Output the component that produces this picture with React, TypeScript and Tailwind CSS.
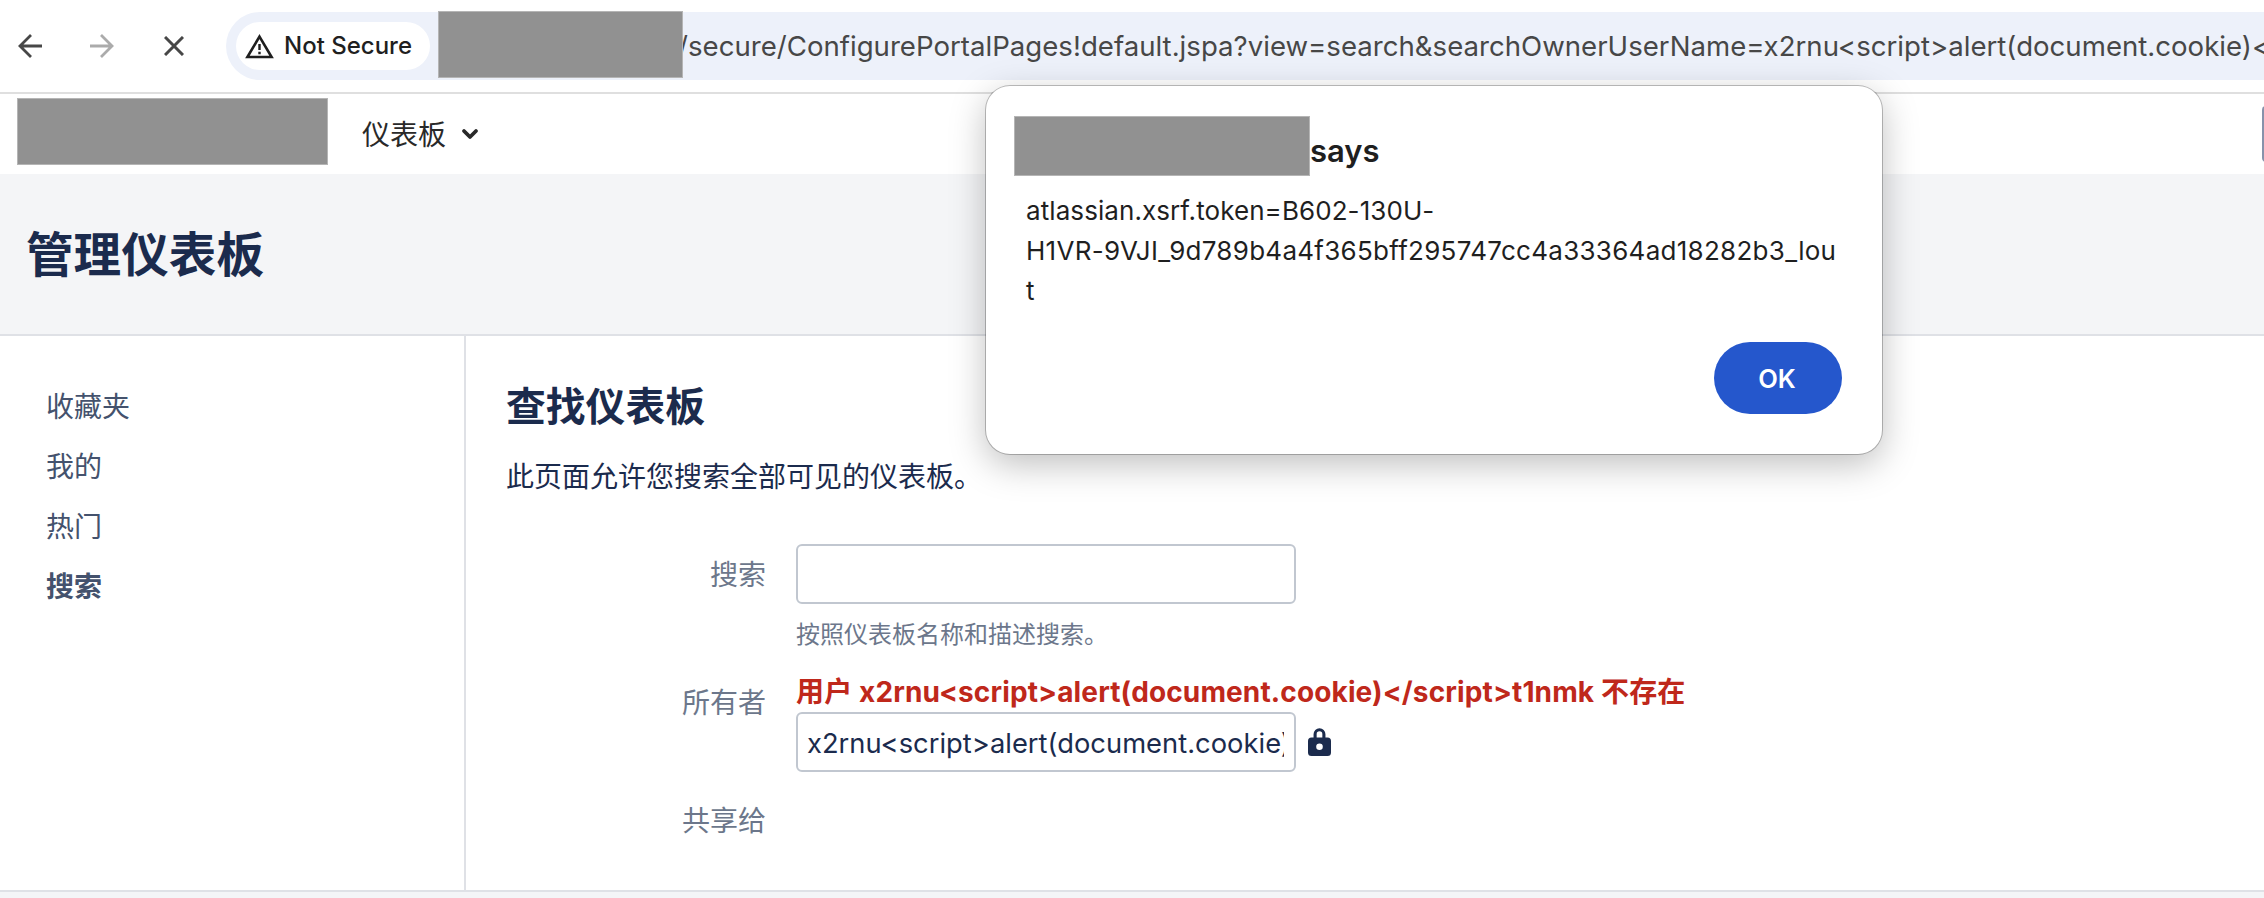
import type { ReactNode } from "react";

function Redacted({ className }: { className: string }) {
  return <div className={`shrink-0 border border-[#b5b5b5] bg-[#919191] ${className}`} />;
}

function BackIcon({ className }: { className: string }) {
  return (
    <svg className={className} width="24" height="24" viewBox="0 0 24 24" fill="none" stroke="currentColor" strokeWidth="2.8">
      <path d="M24 12H2M13 1L2 12L13 23" />
    </svg>
  );
}

function BrowserBar() {
  return (
    <header className="flex h-[94px] shrink-0 items-start overflow-hidden border-b-2 border-[#dfdfdf] bg-white">
      <div className="flex h-[92px] w-[226px] shrink-0 items-center pl-[18px]">
        <BackIcon className="text-[#474747]" />
        <BackIcon className="ml-12 rotate-180 text-[#ababab]" />
        <svg className="ml-[50px] text-[#474747]" width="20" height="20" viewBox="0 0 20 20" fill="none" stroke="currentColor" strokeWidth="3">
          <path d="M1 1L19 19M19 1L1 19" />
        </svg>
      </div>
      <div className="mt-3 flex h-[68px] grow items-center rounded-l-full bg-[#edf1fa] pl-2.5">
        <div className="flex h-12 w-[194px] shrink-0 items-center rounded-full bg-white pl-[9px]">
          <svg className="shrink-0" width="29" height="25" viewBox="0 0 29 25" fill="none">
            <path d="M14.5 2.6L26.6 23H2.4Z" stroke="#1f1f1f" strokeWidth="2.6" />
            <path d="M14.5 10V16M14.5 17.8V20.3" stroke="#1f1f1f" strokeWidth="2.4" />
          </svg>
          <span className="ml-[10px] whitespace-nowrap text-[24px] leading-[30px] font-medium text-[#1f1f1f]">Not Secure</span>
        </div>
        <Redacted className="relative z-10 -mt-[3px] ml-2 h-[67px] w-[245px]" />
        <span className="-ml-[5px] w-0 grow overflow-hidden text-[27.6px] leading-[40px] tracking-[0.01px] whitespace-nowrap text-[#474747]">
          {"/secure/ConfigurePortalPages!default.jspa?view=search&searchOwnerUserName=x2rnu<script>alert(document.cookie)</script>t1nmk"}
        </span>
      </div>
    </header>
  );
}

function NavBar() {
  return (
    <nav className="flex h-20 shrink-0 items-center overflow-hidden bg-white pl-[17px]">
      <Redacted className="-mt-[5px] h-[67px] w-[311px]" />
      <span className="ml-[34px] pt-0.5 text-[28px] leading-[40px] text-[#292929]">仪表板</span>
      <svg className="ml-[15px]" width="18" height="12" viewBox="0 0 18 12" fill="none">
        <path d="M3 3L9 9L15 3" stroke="#292929" strokeWidth="3.8" strokeLinecap="round" strokeLinejoin="round" />
      </svg>
      <div className="-mr-2 ml-auto h-14 w-2.5 rounded-l-[4px] bg-[#8792ab]" />
    </nav>
  );
}

const sections = ["收藏夹", "我的", "热门", "搜索"];

function Sidebar() {
  return (
    <aside className="flex w-[466px] shrink-0 flex-col border-r-2 border-[#dfe1e6] pt-[41px] pl-[46px]">
      {sections.map((name) => (
        <a
          key={name}
          className={
            name === "搜索"
              ? "text-[28px] leading-[60px] font-bold text-[#44526d]"
              : "text-[28px] leading-[60px] text-[#44526d]"
          }
        >
          {name}
        </a>
      ))}
    </aside>
  );
}

function Label({ children }: { children: ReactNode }) {
  return <label className="w-[260px] shrink-0 text-right text-[28px] leading-[40px] text-[#6c778b]">{children}</label>;
}

function SearchForm() {
  return (
    <main className="flex grow flex-col pt-[41px] pl-[40px]">
      <h2 className="text-[39.8px] leading-[60px] font-semibold text-[#1b2b4d]">查找仪表板</h2>
      <p className="mt-5 text-[28px] leading-[40px] text-[#1b2b4d]">此页面允许您搜索全部可见的仪表板。</p>
      <div className="mt-[47px] flex h-[128px] gap-[30px]">
        <div className="flex pt-[11px]">
          <Label>搜索</Label>
        </div>
        <div>
          <div className="h-[60px] w-[500px] rounded-[6px] border-2 border-[#c1c7d0]" />
          <p className="mt-[14px] text-[24px] leading-[34px] text-[#6c778b]">按照仪表板名称和描述搜索。</p>
        </div>
      </div>
      <div className="flex h-[129px] gap-[30px]">
        <div className="flex pt-[11px]">
          <Label>所有者</Label>
        </div>
        <div>
          <p className="h-10 text-[28px] leading-[40px] font-bold tracking-[0.13px] whitespace-nowrap text-[#bf281b]">
            {"用户 x2rnu<script>alert(document.cookie)</script>t1nmk 不存在"}
          </p>
          <div className="flex items-center">
            <div className="flex h-[60px] w-[500px] items-center rounded-[6px] border-2 border-[#c1c7d0] pr-2.5 pl-[9px]">
              <span className="overflow-hidden pt-[3px] text-[27.3px] leading-[40px] tracking-[0.03px] whitespace-nowrap text-[#1b2b4d]">
                {"x2rnu<script>alert(document.cookie)</script>t1nmk"}
              </span>
            </div>
            <svg className="ml-3" width="23" height="28" viewBox="0 0 23 28" fill="none">
              <path d="M7.1 12V6.2a4.4 4.4 0 0 1 8.8 0V12" stroke="#1b2b4d" strokeWidth="3.1" />
              <path
                fillRule="evenodd"
                fill="#1b2b4d"
                d="M3.5 9.5h16A3.5 3.5 0 0 1 23 13V24.5A3.5 3.5 0 0 1 19.5 28H3.5A3.5 3.5 0 0 1 0 24.500V13A3.5 3.5 0 0 1 3.5 9.5ZM11.5 15.4a3.3 3.3 0 1 0 0 6.6a3.3 3.3 0 1 0 0-6.6Z"
              />
            </svg>
          </div>
        </div>
      </div>
      <Label>共享给</Label>
    </main>
  );
}

function AlertDialog() {
  return (
    <div
      role="alertdialog"
      className="absolute top-[86px] left-[986px] flex h-[368px] w-[896px] flex-col rounded-[24px] bg-white pt-[30px] pr-10 pl-[28px] shadow-[0_0_0_1px_rgba(0,0,0,0.24),0_10px_36px_rgba(0,0,0,0.26)]"
    >
      <div className="flex">
        <Redacted className="h-[60px] w-[296px]" />
        <span className="pt-[15px] text-[31px] leading-[40px] font-semibold text-[#1f1f1f]">says</span>
      </div>
      <div className="mt-[15px] pl-3 text-[26px] leading-[40px] whitespace-nowrap text-[#1f1f1f]">
        <p className="tracking-[0.08px]">atlassian.xsrf.token=B602-130U-</p>
        <p className="tracking-[0.28px]">H1VR-9VJI_9d789b4a4f365bff295747cc4a33364ad18282b3_lou</p>
        <p>t</p>
      </div>
      <button className="mt-[31px] flex h-[72px] w-32 items-center justify-center self-end rounded-full bg-[#2557cc] pt-0.5 pr-0.5 text-[25.5px] leading-[40px] font-semibold text-white">
        OK
      </button>
    </div>
  );
}

export default function App() {
  return (
    <div className="relative flex h-[898px] w-[2264px] flex-col overflow-hidden bg-white font-['Inter','Noto_Sans_CJK_SC',sans-serif]">
      <BrowserBar />
      <NavBar />
      <div className="flex h-[162px] shrink-0 items-center border-b-2 border-[#dfe1e6] bg-[#f4f5f7] pt-0.5 pl-[26px]">
        <h1 className="text-[47.6px] leading-[60px] font-semibold text-[#1b2b4d]">管理仪表板</h1>
      </div>
      <div className="flex h-[554px] shrink-0">
        <Sidebar />
        <SearchForm />
      </div>
      <footer className="grow border-t-2 border-[#dfe1e6] bg-[#f4f5f7]" />
      <AlertDialog />
    </div>
  );
}
